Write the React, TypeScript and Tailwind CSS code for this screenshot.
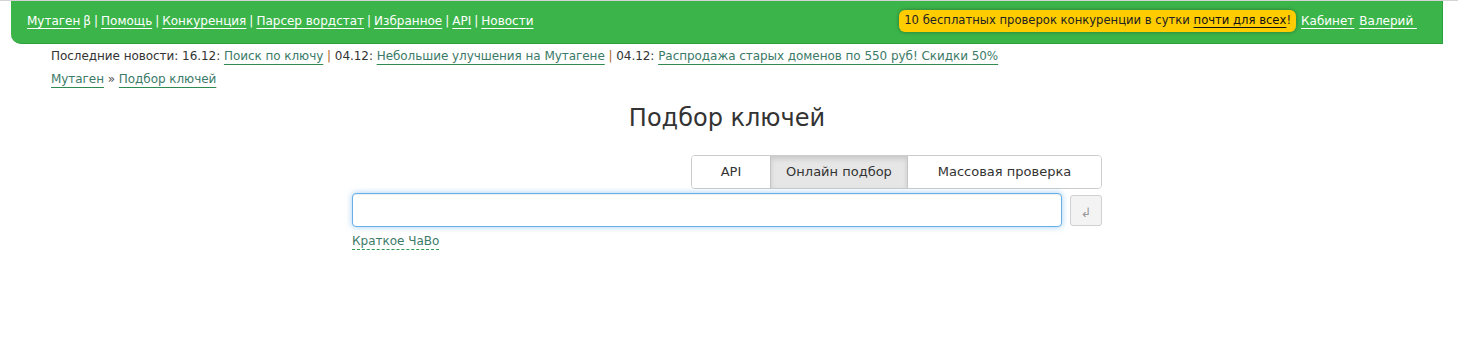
import React from "react";

const F = { fontFamily: '"DejaVu Sans", Verdana, sans-serif' };

function NavLink({ children }: { children: React.ReactNode }) {
  return <a className="text-white underline underline-offset-[3px] decoration-1">{children}</a>;
}

function NewsLink({ children }: { children: React.ReactNode }) {
  return (
    <a className="text-[#3c7a68] underline underline-offset-[4px] decoration-[#2f8a52] decoration-1">{children}</a>
  );
}

const Sep = () => <span className="text-[#b0651a]">|</span>;

export default function App() {
  return (
    <div className="min-h-[362px] bg-white text-[#333]" style={F}>
      <div className="h-px bg-[#d4d4d4]" />
      <div className="ml-[11px] mr-[15px] h-[43px] bg-[#3bb54a] rounded-bl-[10px] border-r border-b border-[#2fa03f] flex items-center justify-between pl-[16px] pr-[25px] text-[12px] text-white">
        <div className="flex items-center gap-[3px] pb-[3px] whitespace-nowrap">
          <NavLink>Мутаген</NavLink><span>β</span><span>|</span>
          <NavLink>Помощь</NavLink><span>|</span>
          <NavLink>Конкуренция</NavLink><span>|</span>
          <NavLink>Парсер вордстат</NavLink><span>|</span>
          <NavLink>Избранное</NavLink><span>|</span>
          <NavLink>API</NavLink><span>|</span>
          <NavLink>Новости</NavLink>
        </div>
        <div className="flex items-center gap-[5px] whitespace-nowrap pb-[2px]">
          <div className="bg-[#ffcc00] rounded-[6px] px-[5px] h-[22px] flex items-center text-[#222] text-[11.6px] shadow-[0_0_4px_rgba(0,0,0,0.35)]">
            <span>10 бесплатных проверок конкуренции в сутки&nbsp;</span>
            <a className="underline underline-offset-[3px] text-[#111]">почти для всех</a>
            <span>!</span>
          </div>
          <NavLink>Кабинет</NavLink>
          <a className="text-white underline underline-offset-[3px]">Валерий&nbsp;</a>
        </div>
      </div>

      <div className="pl-[51px] pt-[1px] text-[12px] leading-[23px] whitespace-nowrap tracking-[-0.05px]">
        <div>
          Последние новости: 16.12: <NewsLink>Поиск по ключу</NewsLink> <Sep /> 04.12:{" "}
          <NewsLink>Небольшие улучшения на Мутагене</NewsLink> <Sep /> 04.12:{" "}
          <NewsLink>Распродажа старых доменов по 550 руб! Скидки 50%</NewsLink>
        </div>
        <div>
          <NewsLink>Мутаген</NewsLink> <span className="text-[#555]">»</span> <NewsLink>Подбор ключей</NewsLink>
        </div>
      </div>

      <h1 className="text-center text-[24px] text-[#333] mt-[12px] leading-[30px] -translate-x-[2px]">Подбор ключей</h1>

      <div className="w-[750px] mx-auto mt-[22px] -translate-x-[2px]">
        <div className="flex justify-end">
          <div className="flex h-[34px] border border-[#cccccc] rounded-[4px] text-[13px] text-[#333] overflow-hidden">
            <div className="w-[78px] flex items-center justify-center bg-white">API</div>
            <div className="w-[138px] flex items-center justify-center bg-[#e6e6e6] border-l border-r border-[#c4c4c4] shadow-[inset_0_3px_5px_rgba(0,0,0,0.125)]">
              Онлайн подбор
            </div>
            <div className="w-[193px] flex items-center justify-center bg-white">Массовая проверка</div>
          </div>
        </div>
        <div className="flex items-center mt-[4px] gap-[8px]">
          <div className="w-[710px] h-[34px] rounded-[4px] border border-[#66afe9] bg-white shadow-[inset_0_1px_1px_rgba(0,0,0,0.075),0_0_6px_rgba(102,175,233,0.6)]" />
          <div className="w-[32px] h-[31px] rounded-[3px] border border-[#d0d0d0] bg-[#f3f3f3] flex items-center justify-center text-[#999] text-[13px] pt-[6px]">
            ↲
          </div>
        </div>
        <div className="mt-[5px] text-[12px] leading-[18px]">
          <a className="text-[#3c7a68] border-b border-dashed border-[#2f9a52] pb-[1px]">Краткое ЧаВо</a>
        </div>
      </div>
    </div>
  );
}
